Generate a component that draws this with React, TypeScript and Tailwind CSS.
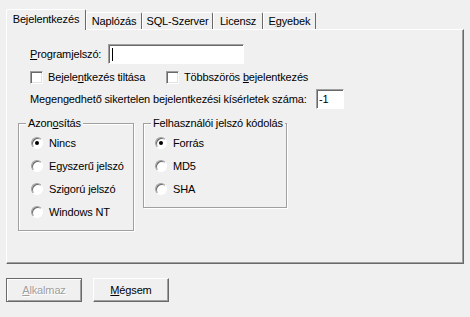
import type { ReactNode } from 'react'

const tabs = [
  { label: <>Bejelentkezés</>, w: 'w-[80px]', active: true },
  { label: <>Naplózás</>, w: 'w-[56px]' },
  { label: <>SQL-Szerver</>, w: 'w-[71px]' },
  { label: <>Licensz</>, w: 'w-[50px]' },
  { label: <>E<u>g</u>yebek</>, w: 'w-[53px]' },
]

function Checkbox({ children, className = '' }: { children: ReactNode; className?: string }) {
  return (
    <div className={`flex items-center h-[16px] ${className}`}>
      <span className="w-[13px] h-[13px] bg-white border border-t-[#a0a0a0] border-l-[#a0a0a0] border-r-white border-b-white shadow-[inset_1px_1px_0_#696969,inset_-1px_-1px_0_#e3e3e3]" />
      <span className="ml-[5px]">{children}</span>
    </div>
  )
}

function Radio({ children, checked }: { children: ReactNode; checked?: boolean }) {
  return (
    <div className="flex items-center h-[16px]">
      <span className="w-[12px] h-[12px] rounded-full bg-white border border-t-[#a0a0a0] border-l-[#a0a0a0] border-r-white border-b-white shadow-[inset_1px_1px_0_#696969] flex items-center justify-center">
        {checked && <span className="w-[4px] h-[4px] rounded-full bg-black" />}
      </span>
      <span className="ml-[6px]">{children}</span>
    </div>
  )
}

function Group({ title, className, children }: { title: ReactNode; className: string; children: ReactNode }) {
  return (
    <div className={`relative border border-[#a0a0a0] shadow-[inset_1px_1px_0_#fff,1px_1px_0_#fff] ${className}`}>
      <span className="absolute -top-[8px] left-[7px] px-[2px] bg-[#f0f0f0] leading-[14px] whitespace-nowrap">{title}</span>
      {children}
    </div>
  )
}

export default function App() {
  return (
    <div className="w-[470px] h-[317px] bg-[#f0f0f0] pt-[9px] pl-[6px] text-[11px] leading-[13px] tracking-[-0.15px] whitespace-nowrap text-black font-['Liberation_Sans',Arial,sans-serif]">
      {/* tab strip */}
      <div className="relative z-10 flex items-end h-[21px]">
        {tabs.map((t, i) =>
          t.active ? (
            <div key={i} className={`${t.w} h-[21px] bg-[#f0f0f0] border-l border-t border-l-white border-t-white border-r border-r-[#696969] rounded-t-[2px] flex items-start pt-[3px] justify-center`}>
              {t.label}
            </div>
          ) : (
            <div key={i} className={`${t.w} h-[17px] mb-[1px] border-l border-t border-l-white border-t-white border-r border-r-[#696969] rounded-t-[2px] flex items-start pt-[2px] justify-center`}>
              {t.label}
            </div>
          )
        )}
      </div>

      {/* panel */}
      <div className="-mt-px w-[458px] h-[235px] border border-t-white border-l-white border-r-[#696969] border-b-[#696969] shadow-[inset_-1px_-1px_0_#a0a0a0]">
        <div className="flex items-center h-[20px] mt-[14px] ml-[23px]">
          <span className="w-[78px]"><u>P</u>rogramjelszó:</span>
          <div className="w-[136px] h-[20px] bg-white border border-t-[#a0a0a0] border-l-[#a0a0a0] border-r-white border-b-white shadow-[inset_1px_1px_0_#696969] flex items-center pl-[3px]">
            <span className="w-px h-[13px] bg-black" />
          </div>
        </div>

        <div className="flex mt-[5px] ml-[23px]">
          <Checkbox className="w-[136px]">Bejele<u>n</u>tkezés tiltása</Checkbox>
          <Checkbox>Többszörös <u>b</u>ejelentkezés</Checkbox>
        </div>

        <div className="flex items-center h-[20px] mt-[4px] ml-[23px]">
          <span className="w-[286px]">Megengedhető sikertelen bejelentkezési kísérletek száma:</span>
          <div className="w-[28px] h-[20px] bg-white border border-t-[#a0a0a0] border-l-[#a0a0a0] border-r-white border-b-white shadow-[inset_1px_1px_0_#696969] flex items-center pl-[2px]">
            -1
          </div>
        </div>

        <div className="flex items-start gap-[9px] mt-[14px] ml-[11px]">
          <Group title={<>Azon<u>o</u>sítás</>} className="w-[116px] h-[108px] pt-[11px] pl-[12px] flex flex-col gap-[7px]">
            <Radio checked>Nincs</Radio>
            <Radio>E<u>g</u>yszerű jelszó</Radio>
            <Radio>Szigorú jelszó</Radio>
            <Radio>Windows NT</Radio>
          </Group>
          <Group title="Felhasználói jelszó kódolás" className="w-[144px] h-[85px] pt-[11px] pl-[11px] flex flex-col gap-[7px]">
            <Radio checked>Forrás</Radio>
            <Radio>MD5</Radio>
            <Radio>SHA</Radio>
          </Group>
        </div>
      </div>

      {/* buttons */}
      <div className="flex gap-[11px] mt-[14px]">
        <button className="w-[76px] h-[24px] border border-[#696969] bg-[#f0f0f0] shadow-[inset_1px_1px_0_#fff,inset_-1px_-1px_0_#a0a0a0] text-[#a0a0a0] [text-shadow:1px_1px_0_#fff]">
          <u>A</u>lkalmaz
        </button>
        <button className="w-[76px] h-[24px] border border-t-white border-l-white border-r-[#696969] border-b-[#696969] bg-[#f0f0f0] shadow-[inset_-1px_-1px_0_#a0a0a0]">
          <u>M</u>égsem
        </button>
      </div>
    </div>
  )
}
